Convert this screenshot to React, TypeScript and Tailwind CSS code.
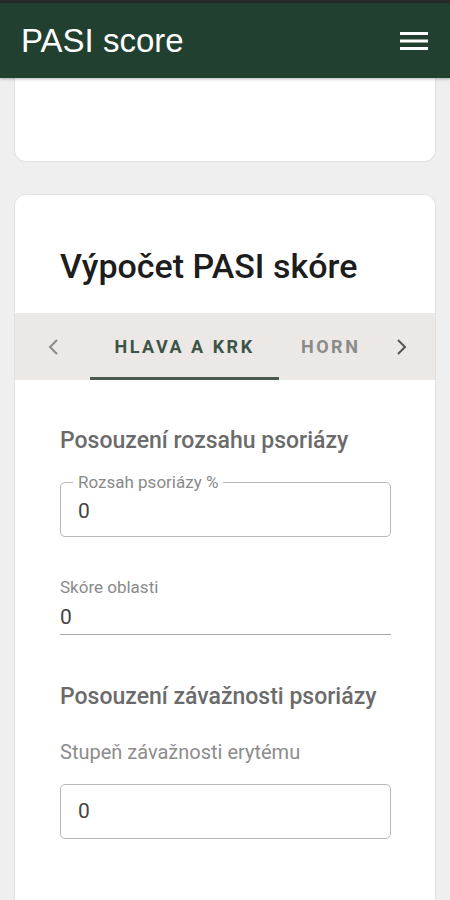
import React from "react";

const font = { fontFamily: "Roboto, 'Liberation Sans', sans-serif" };

const Hamburger = () => (
  <svg width="28" height="20" viewBox="0 0 28 20" className="block">
    <rect x="0" y="1" width="28" height="3" fill="#fff" />
    <rect x="0" y="8.5" width="28" height="3" fill="#fff" />
    <rect x="0" y="16" width="28" height="3" fill="#fff" />
  </svg>
);

const Chevron = ({ dir }: { dir: "left" | "right" }) => (
  <svg width="14" height="20" viewBox="0 0 14 20" className="block">
    <path
      d={dir === "left" ? "M10 3 L3 10 L10 17" : "M4 3 L11 10 L4 17"}
      fill="none"
      stroke={dir === "left" ? "#8a8a8a" : "#555"}
      strokeWidth="2"
    />
  </svg>
);

export default function App() {
  return (
    <div className="w-[450px] h-[900px] overflow-hidden bg-[#efefef]" style={font}>
      {/* HEADER */}
      <div className="h-[3px] bg-[#2a2a2a]" />
      <div className="h-[75px] bg-[#21402f] flex items-center justify-between pl-[21px] pr-[22px] shadow-[0_1px_3px_rgba(0,0,0,0.3)] relative z-10">
        <span className="text-white text-[33px] leading-none" style={{ fontFamily: "'Liberation Sans', Arial, sans-serif" }}>
          PASI score
        </span>
        <Hamburger />
      </div>

      <div className="px-[14px]">
        {/* first card, mostly scrolled away */}
        <div className="h-[84px] bg-white rounded-b-[12px] border border-t-0 border-[#e2e2e2]" />

        {/* second card */}
        <div className="mt-[32px] bg-white rounded-t-[12px] border border-b-0 border-[#e2e2e2] h-[720px]">
          <h2 className="pl-[45px] pt-[51px] pb-[27px] text-[34px] leading-[40px] font-medium text-[#1d1d1d]">
            Výpočet PASI skóre
          </h2>

          {/* tabs */}
          <div className="h-[67px] bg-[#ece8e6] flex items-stretch">
            <div className="w-[75px] flex items-center justify-center pl-[2px]">
              <Chevron dir="left" />
            </div>
            <div className="w-[189px] relative flex items-center justify-center">
              <span className="text-[18px] font-bold tracking-[2.5px] text-[#3d5546] whitespace-nowrap">HLAVA A KRK</span>
              <div className="absolute left-0 right-0 bottom-0 h-[3px] bg-[#4a5c50]" />
            </div>
            <div className="w-[110px] flex items-center pl-[22px] overflow-hidden">
              <span className="text-[18px] font-bold tracking-[2.5px] text-[#8a8a8a] whitespace-nowrap">HORN</span>
            </div>
            <div className="flex-1 flex items-center justify-center pr-[22px]">
              <Chevron dir="right" />
            </div>
          </div>

          {/* form */}
          <div className="pl-[45px] pr-[46px]">
            <h3 className="mt-[47px] text-[23px] leading-[28px] font-medium text-[#6b6b6b] whitespace-nowrap">
              Posouzení rozsahu psoriázy
            </h3>

            <div className="relative mt-[27px] w-[331px] h-[55px] border border-[#b8b8b8] rounded-[5px] flex items-center pl-[17px] pt-[4px]">
              <span className="absolute -top-[11px] left-[12px] px-[5px] bg-white text-[17px] leading-[20px] text-[#8a8a8a]">
                Rozsah psoriázy %
              </span>
              <span className="text-[21px] text-[#444]">0</span>
            </div>

            <div className="mt-[40px] text-[17px] leading-[20px] text-[#8a8a8a]">Skóre oblasti</div>
            <div className="w-[331px] border-b border-[#a8a8a8] text-[21px] leading-[28px] pt-[6px] pb-[3px] text-[#444]">
              0
            </div>

            <h3 className="mt-[48px] text-[23px] leading-[28px] font-medium text-[#6b6b6b] whitespace-nowrap">
              Posouzení závažnosti psoriázy
            </h3>
            <div className="mt-[29px] text-[20px] leading-[24px] text-[#8c8c8c] whitespace-nowrap">Stupeň závažnosti erytému</div>

            <div className="mt-[20px] w-[331px] h-[55px] border border-[#b8b8b8] rounded-[5px] flex items-center pl-[17px]">
              <span className="text-[21px] text-[#444]">0</span>
            </div>
          </div>
        </div>
      </div>
    </div>
  );
}
